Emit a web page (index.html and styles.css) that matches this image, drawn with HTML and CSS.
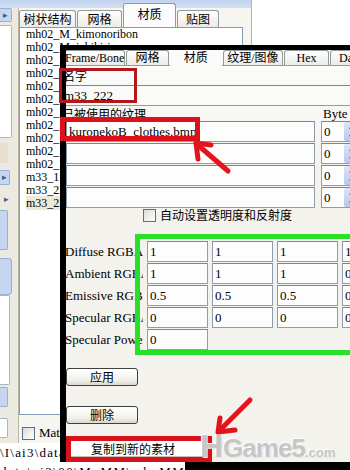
FILE: index.html
```html
<!DOCTYPE html>
<html lang="zh">
<head>
    <meta charset="UTF-8">
    <meta name="viewport" content="width=device-width, initial-scale=1.0">
    <title>材质</title>
    <link rel="stylesheet" href="styles.css">
</head>
<body>
<div class="desk">
    <div class="top">
        <div class="bgwin">
            <div class="band"></div>
            <div class="winbody">
                <div class="strip">
                    <div class="sb blue s1">▸</div>
                    <div class="sb white s2"></div>
                    <div class="sb beige s3"></div>
                    <div class="sb blue s4">▸</div>
                    <div class="sb s5">▸</div>
                    <div class="sb blue s6"></div>
                    <div class="sb blue s7"></div>
                    <div class="sb white s8"></div>
                    <div class="sb blue s9"></div>
                    <div class="sb white s10"></div>
                </div>
                <div class="pane">
                    <div class="tabs">
                        <div class="tab w1">树状结构</div>
                        <div class="tab w2">网格</div>
                        <div class="tab w3 on">材质</div>
                        <div class="tab w4">贴图</div>
                    </div>
                    <div class="list">
                        <div>mh02_M_kimonoribon</div>
                        <div>mh02_M_ichikiri</div>
                        <div>mh02_M_obi</div>
                        <div>mh02_M_hair</div>
                        <div>mh02_M_face</div>
                        <div>mh02_M_body</div>
                        <div>mh02_M_eye</div>
                        <div>mh02_M_skin</div>
                        <div>mh02_M_leg</div>
                        <div>mh02_M_hand</div>
                        <div>mh02_M_tail</div>
                        <div>m33_111</div>
                        <div>m33_222</div>
                        <div><span class="sel">m33_222</span></div>
                    </div>
                    <div class="mate"><span class="chk"></span>Material</div>
                </div>
            </div>
        </div>
        <div class="rest"></div>
    </div>
    <div class="path">\I\ai3\data\chara</div>
    <div class="pathrow">
        <div class="cut">data\ai3\00\M_MM\mh_MM\MM_MM</div>
        <div class="blk"></div>
    </div>
</div>

<div class="dlg">
    <div class="dtabs">
        <div class="dt first">Frame/Bone</div>
        <div class="dt d2">网格</div>
        <div class="dt d3 on">材质</div>
        <div class="dt d4">纹理/图像</div>
        <div class="dt d5">Hex</div>
        <div class="dt d6">Data</div>
    </div>
    <div class="cn name">名字</div>
    <div class="inp namefld">m33_222</div>
    <div class="thead">
        <span class="cn used">已被使用的纹理</span>
        <span class="byte">Byte Offset</span>
    </div>
    <div class="trows">
        <div class="inp">kuronekoB_clothes.bmp</div>
        <div class="inp num">0<span class="spin"><i>▴</i><i>▾</i></span></div>
        <div class="inp"></div>
        <div class="inp num">0<span class="spin"><i>▴</i><i>▾</i></span></div>
        <div class="inp"></div>
        <div class="inp num">0<span class="spin"><i>▴</i><i>▾</i></span></div>
        <div class="inp"></div>
        <div class="inp num">0<span class="spin"><i>▴</i><i>▾</i></span></div>
    </div>
    <div class="auto"><span class="chk"></span><span class="cn">自动设置透明度和反射度</span></div>
    <div class="mat">
        <div class="ml">Diffuse RGBA</div>
        <div class="inp">1</div><div class="inp">1</div><div class="inp">1</div><div class="inp">1</div>
        <div class="ml">Ambient RGBA</div>
        <div class="inp">1</div><div class="inp">1</div><div class="inp">1</div><div class="inp">0</div>
        <div class="ml">Emissive RGBA</div>
        <div class="inp">0.5</div><div class="inp">0.5</div><div class="inp">0.5</div><div class="inp">0</div>
        <div class="ml">Specular RGBA</div>
        <div class="inp">0</div><div class="inp">0</div><div class="inp">0</div><div class="inp">0</div>
        <div class="ml">Specular Power</div>
        <div class="inp">0</div>
    </div>
    <button class="btn b1">应用</button>
    <button class="btn b2">删除</button>
    <button class="copy">复制到新的素材</button>
</div>

<div class="mark r1"></div>
<div class="mark r2"></div>
<div class="mark g1"></div>
<div class="mark r3"></div>
<div class="wm"><span class="wh">H</span><span class="wg">Game5</span><span class="wc">.com</span></div>

<svg class="arrows" width="350" height="470" viewBox="0 0 350 470">
    <g fill="none" stroke="#e3151b" stroke-width="5" stroke-linecap="round" stroke-linejoin="round">
        <path d="M228 171 L199 146"/>
        <path d="M198 159 L196 143 L211 145"/>
        <path d="M250 400 L221 429"/>
        <path d="M220 418 L218 432 L235 430"/>
    </g>
</svg>
</body>
</html>
```

FILE: styles.css
```css
* {
    box-sizing: border-box;
}
html {
    overflow: hidden;
}
body {
    margin: 0;
    width: 350px;
    height: 470px;
    overflow: hidden;
    position: relative;
    background-color: #ffffff;
    font-family: "Liberation Serif", "Noto Sans CJK SC", serif;
    font-size: 13px;
    color: #000;
}
.cn {
    font-family: "Noto Sans CJK SC", sans-serif;
    font-size: 12px;
}

/* background window */
.desk {
    display: flex;
    flex-direction: column;
    height: 470px;
}
.top {
    display: flex;
    height: 443px;
}
.bgwin {
    width: 252px;
    display: flex;
    flex-direction: column;
    background-color: #f6f5f0;
    border-right: 1px solid #b3b3b3;
}
.rest {
    flex: 1;
    background-color: #fff;
}
.band {
    height: 8px;
    background: linear-gradient(#bfd1ee, #d3e0f4);
}
.winbody {
    flex: 1;
    display: flex;
}
.strip {
    width: 19px;
    display: flex;
    flex-direction: column;
    background-color: #eceae0;
    border-right: 1px solid #b9b6a6;
}
.sb {
    flex: none;
    width: 12px;
    font-size: 9px;
    line-height: 13px;
    text-align: center;
    color: #3d5a8c;
    border-radius: 0 2px 2px 0;
}
.blue {
    background-color: #c6d5f0;
    border: 1px solid #98afd6;
    border-left: none;
}
.white {
    background-color: #fff;
    border: 1px solid #a5b6cf;
    border-left: none;
}
.beige {
    background-color: #e6e0cc;
}
.s1 { height: 14px; }
.s2 { height: 113px; margin-top: 3px; }
.s3 { height: 20px; width: 8px; margin-top: 5px; }
.s4 { height: 15px; width: 10px; margin-top: 7px; }
.s5 { height: 12px; margin-top: 8px; line-height: 12px; }
.s6 { height: 40px; width: 8px; margin-top: 5px; }
.s7 { height: 37px; margin-top: 8px; border-radius: 0 4px 4px 0; }
.s8 { height: 90px; width: 10px; }
.s9 { height: 20px; width: 8px; margin-top: 2px; }
.s10 { height: 20px; width: 8px; margin-top: 11px; }

.pane {
    flex: 1;
    display: flex;
    flex-direction: column;
}
.tabs {
    height: 19px;
    display: flex;
    align-items: flex-end;
}
.tab {
    height: 17px;
    border: 1px solid #919b9c;
    border-bottom: none;
    border-radius: 3px 3px 0 0;
    background: linear-gradient(#ffffff, #ecebe6);
    font-family: "Noto Sans CJK SC", sans-serif;
    font-size: 12px;
    line-height: 16px;
    text-align: center;
    margin-right: 1px;
}
.tab.on {
    height: 24px;
    background: #fcfcfe;
    line-height: 20px;
}
.w1 { width: 57px; }
.w2 { width: 45px; }
.w3 { width: 53px; }
.w4 { width: 42px; }
.list {
    height: 388px;
    margin-right: 8px;
    border: 1px solid #7f9db9;
    background-color: #fff;
    padding-left: 6px;
    font-size: 12px;
    line-height: 13px;
    white-space: nowrap;
    overflow: hidden;
}
.sel {
    background-color: #ece9d8;
}
.mate {
    display: flex;
    align-items: center;
    gap: 4px;
    padding: 10px 0 0 3px;
    font-size: 13px;
}
.chk {
    flex: none;
    width: 13px;
    height: 13px;
    border: 1px solid #56708f;
    background: linear-gradient(135deg, #dcdcd7, #ffffff);
}
.path {
    height: 19px;
    line-height: 19px;
    letter-spacing: 1.2px;
    white-space: nowrap;
}
.pathrow {
    height: 8px;
    display: flex;
}
.cut {
    width: 185px;
    overflow: hidden;
    white-space: nowrap;
    line-height: 13px;
    padding-top: 3px;
    letter-spacing: 1.5px;
}
.blk {
    flex: 1;
    background-color: #000;
}

/* material dialog */
.dlg {
    position: absolute;
    left: 60px;
    top: 45px;
    width: 320px;
    height: 417px;
    border-left: 6px solid #000;
    border-top: 5px solid #000;
    background: linear-gradient(#fcfcfb, #f3f2ed 30%);
    overflow: hidden;
    display: flex;
    flex-direction: column;
}
.dtabs {
    height: 16px;
    flex: none;
    display: flex;
    border-bottom: 1px solid #919b9c;
}
.dt {
    height: 15px;
    border: 1px solid #919b9c;
    border-bottom: none;
    border-radius: 3px 3px 0 0;
    background: linear-gradient(#ffffff, #ecebe6);
    font-size: 12px;
    line-height: 14px;
    text-align: center;
    white-space: nowrap;
    margin-right: 1px;
}
.dt.on {
    height: 16px;
    border-color: transparent;
    background: #fbfbfa;
}
.first { width: 61px; margin-left: -2px; }
.d2 { width: 44px; }
.d3 { width: 53px; }
.d4 { width: 62px; }
.d5 { width: 46px; }
.d6 { width: 50px; text-align: left; padding-left: 8px; }
.name {
    flex: none;
    height: 19px;
    line-height: 20px;
    margin-left: -3px;
}
.inp {
    height: 21px;
    border: 1px solid #8d9db0;
    border-top-color: #76879a;
    background-color: #fdfdfd;
    padding-left: 2px;
    line-height: 19px;
    white-space: nowrap;
    overflow: hidden;
}
.namefld {
    flex: none;
    margin-left: -4px;
    background-color: #fafaf8;
    padding-left: 1px;
}
.thead {
    flex: none;
    height: 15px;
    display: grid;
    grid-template-columns: 249px 60px;
    column-gap: 6px;
    line-height: 15px;
}
.used {
    margin-left: -4px;
    white-space: nowrap;
}
.byte {
    padding-left: 2px;
    white-space: nowrap;
}
.trows {
    flex: none;
    display: grid;
    grid-template-columns: 249px 45px;
    grid-auto-rows: 21px;
    column-gap: 6px;
    row-gap: 1px;
}
.num {
    display: flex;
}
.spin {
    margin-left: 13px;
    width: 14px;
    height: 19px;
    display: flex;
    flex-direction: column;
    background: linear-gradient(#dbe5fb, #b5c8f1);
    border-radius: 2px;
}
.spin i {
    flex: 1;
    font-style: normal;
    font-size: 8px;
    line-height: 9px;
    text-align: center;
    color: #4d6185;
}
.auto {
    flex: none;
    height: 14px;
    display: flex;
    align-items: center;
    gap: 4px;
    padding-left: 77px;
    line-height: 14px;
    white-space: nowrap;
}
.mat {
    flex: none;
    margin-top: 19px;
    display: grid;
    grid-template-columns: 77px repeat(4, 61px);
    grid-auto-rows: 21px;
    column-gap: 4px;
    row-gap: 1px;
}
.ml {
    margin-left: -1px;
    line-height: 21px;
    white-space: nowrap;
    overflow: hidden;
}
.btn {
    flex: none;
    width: 72px;
    height: 18px;
    padding: 0;
    border: 1px solid #3f3f3f;
    border-radius: 3px;
    background: linear-gradient(#ffffff, #f1f0eb 70%, #d9d7cd);
    font-family: "Noto Sans CJK SC", sans-serif;
    font-size: 12px;
    line-height: 16px;
    color: #000;
}
.b1 { margin-top: 18px; }
.b2 { margin-top: 20px; }
.copy {
    flex: none;
    margin: 17px 0 0 5px;
    width: 135px;
    height: 16px;
    padding: 0 0 0 20px;
    border: none;
    border-right: 1px solid #c4c2b8;
    border-bottom: 1px solid #c4c2b8;
    background-color: #fff;
    text-align: left;
    font-family: "Noto Sans CJK SC", sans-serif;
    font-size: 12px;
    line-height: 15px;
    color: #000;
}

/* annotations on top of the screenshot */
.mark {
    position: absolute;
}
.r1 {
    left: 59px;
    top: 68px;
    width: 78px;
    height: 35px;
    border: 3px solid #b3171b;
}
.r2 {
    left: 60px;
    top: 117px;
    width: 140px;
    height: 24px;
    border: 5px solid #e0101a;
}
.g1 {
    left: 135px;
    top: 234px;
    width: 230px;
    height: 121px;
    border: 5px solid #27e027;
}
.r3 {
    left: 66px;
    top: 436px;
    width: 146px;
    height: 26px;
    border: 5px solid #d9111a;
}
.wm {
    position: absolute;
    left: 200px;
    top: 428px;
    display: flex;
    align-items: baseline;
    font-family: "Liberation Sans", sans-serif;
    font-weight: bold;
    color: #c6c6c6;
    text-shadow: -1px -1px 0 #fff, 1px 1px 0 #e8e8e8;
}
.wh {
    font-size: 32px;
}
.wg {
    font-size: 26px;
    letter-spacing: -1px;
}
.wc {
    font-size: 13px;
}
.arrows {
    position: absolute;
    left: 0;
    top: 0;
}
```
